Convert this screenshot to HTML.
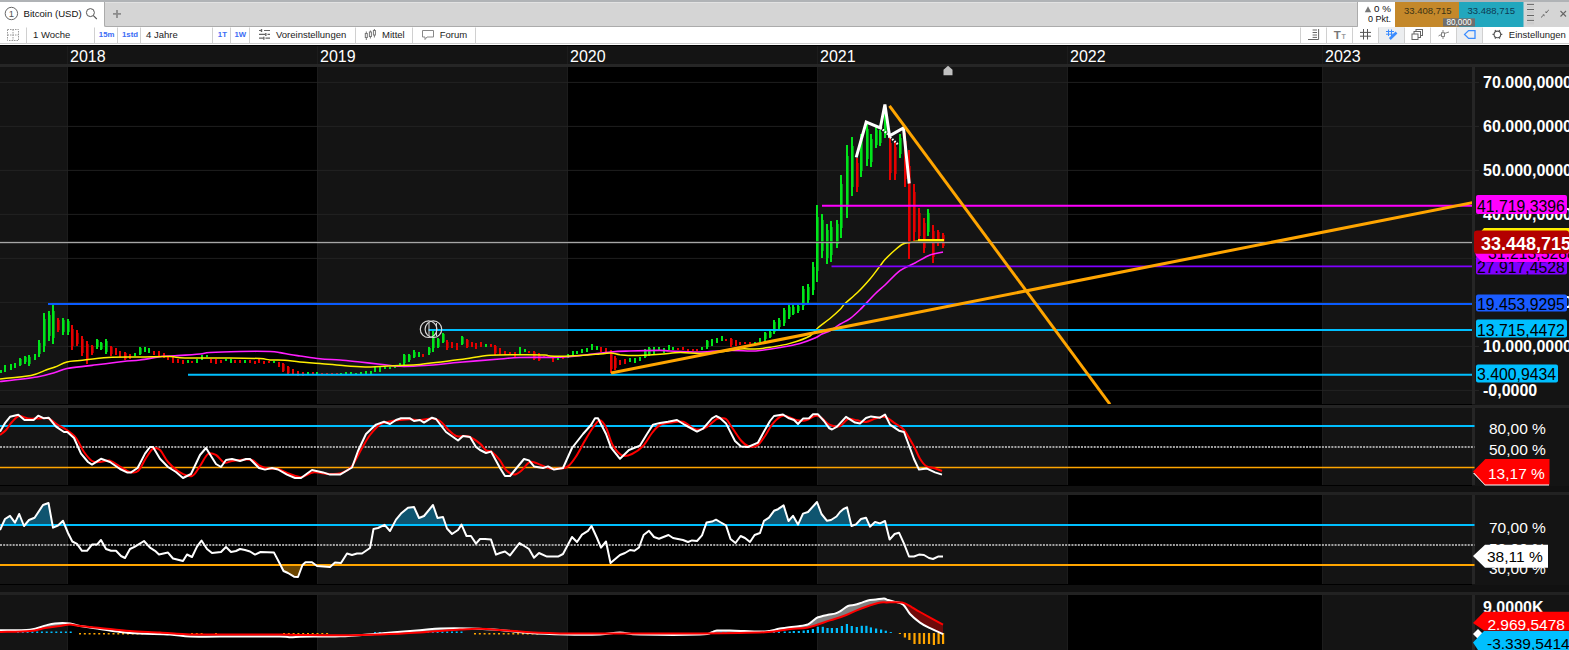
<!DOCTYPE html>
<html><head><meta charset="utf-8"><title>Bitcoin (USD)</title>
<style>
html,body{margin:0;padding:0;width:1569px;height:650px;overflow:hidden;background:#141414;}
body{position:relative;font-family:"Liberation Sans",sans-serif;}
svg text{font-family:"Liberation Sans",sans-serif;}
.a{position:absolute;}
.t{position:absolute;font-size:9.5px;color:#222;white-space:nowrap;line-height:1;}
.sep{position:absolute;width:1px;background:#d4d4d4;}
</style></head><body>
<svg width="1569" height="650" viewBox="0 0 1569 650" style="position:absolute;left:0;top:0"><defs>
<clipPath id="cMain"><rect x="0" y="67" width="1472" height="337"/></clipPath>
<clipPath id="cRsi"><rect x="0" y="408" width="1475" height="77"/></clipPath>
<clipPath id="cS2"><rect x="0" y="495" width="1475" height="89"/></clipPath>
<clipPath id="cMacd"><rect x="0" y="595" width="1472" height="55"/></clipPath>
<clipPath id="cAbove"><rect x="0" y="400" width="1472" height="125"/></clipPath>
<clipPath id="cBelow"><rect x="0" y="565" width="1472" height="30"/></clipPath>
<clipPath id="cAboveR"><polygon points="0,632 30,631 45,628 60,626 70,624.6 80,626 100,628 130,631 160,632.6 190,634.5 220,634.5 280,634.5 300,635 340,635.3 380,634.5 420,632.5 460,629.6 480,628.8 510,630.8 560,633.4 700,633.4 765,632.3 790,629 808,627.4 830,620.4 845,615.5 860,609 878,603 887,602.4 902,602.6 912,607.3 920,612 943,624.6 943,590 0,590"/></clipPath>
<clipPath id="cAboveW"><polygon points="0,630.3 30,629.7 45,625.6 55,623.4 70,623.4 80,626 100,629 120,632 140,633.6 170,634.5 190,636.6 220,636.6 280,636.6 290,637.3 300,636.7 340,636.3 380,633.4 420,630.3 440,628.5 470,628.5 500,630 530,633 565,634.5 600,634.5 620,632.5 640,634.5 700,634.5 712,632.3 717,630.5 735,630.7 765,631.5 780,628.6 800,626 808,624.4 812,621.6 818,617.3 828,614.8 835,613.6 840,611.4 848,606 855,604.8 862,602.6 868,600.4 876,599.5 884,598.5 888,600 894,601.6 903,604.4 910,614 920,622.6 930,628.2 943,634 943,590 0,590"/></clipPath>
</defs><rect x="0" y="45" width="1569" height="605" fill="#141414"/><rect x="68" y="67" width="250" height="337" fill="#000"/><rect x="68" y="408" width="250" height="77" fill="#000"/><rect x="68" y="495" width="250" height="89" fill="#000"/><rect x="68" y="595" width="250" height="55" fill="#000"/><rect x="568" y="67" width="250" height="337" fill="#000"/><rect x="568" y="408" width="250" height="77" fill="#000"/><rect x="568" y="495" width="250" height="89" fill="#000"/><rect x="568" y="595" width="250" height="55" fill="#000"/><rect x="1068" y="67" width="254" height="337" fill="#000"/><rect x="1068" y="408" width="254" height="77" fill="#000"/><rect x="1068" y="495" width="254" height="89" fill="#000"/><rect x="1068" y="595" width="254" height="55" fill="#000"/><rect x="67" y="46" width="1" height="18" fill="#1c1c1c"/><rect x="67" y="67" width="1" height="337" fill="#1c1c1c"/><rect x="67" y="408" width="1" height="77" fill="#1c1c1c"/><rect x="67" y="495" width="1" height="89" fill="#1c1c1c"/><rect x="67" y="595" width="1" height="55" fill="#1c1c1c"/><rect x="317" y="46" width="1" height="18" fill="#1c1c1c"/><rect x="317" y="67" width="1" height="337" fill="#1c1c1c"/><rect x="317" y="408" width="1" height="77" fill="#1c1c1c"/><rect x="317" y="495" width="1" height="89" fill="#1c1c1c"/><rect x="317" y="595" width="1" height="55" fill="#1c1c1c"/><rect x="567" y="46" width="1" height="18" fill="#1c1c1c"/><rect x="567" y="67" width="1" height="337" fill="#1c1c1c"/><rect x="567" y="408" width="1" height="77" fill="#1c1c1c"/><rect x="567" y="495" width="1" height="89" fill="#1c1c1c"/><rect x="567" y="595" width="1" height="55" fill="#1c1c1c"/><rect x="817" y="46" width="1" height="18" fill="#1c1c1c"/><rect x="817" y="67" width="1" height="337" fill="#1c1c1c"/><rect x="817" y="408" width="1" height="77" fill="#1c1c1c"/><rect x="817" y="495" width="1" height="89" fill="#1c1c1c"/><rect x="817" y="595" width="1" height="55" fill="#1c1c1c"/><rect x="1067" y="46" width="1" height="18" fill="#1c1c1c"/><rect x="1067" y="67" width="1" height="337" fill="#1c1c1c"/><rect x="1067" y="408" width="1" height="77" fill="#1c1c1c"/><rect x="1067" y="495" width="1" height="89" fill="#1c1c1c"/><rect x="1067" y="595" width="1" height="55" fill="#1c1c1c"/><rect x="1322" y="46" width="1" height="18" fill="#1c1c1c"/><rect x="1322" y="67" width="1" height="337" fill="#1c1c1c"/><rect x="1322" y="408" width="1" height="77" fill="#1c1c1c"/><rect x="1322" y="495" width="1" height="89" fill="#1c1c1c"/><rect x="1322" y="595" width="1" height="55" fill="#1c1c1c"/><rect x="0" y="45" width="1569" height="1" fill="#000"/><rect x="0" y="64" width="1569" height="3" fill="#262626"/><rect x="0" y="404" width="1472" height="1" fill="#000"/><rect x="0" y="405" width="1569" height="3" fill="#242424"/><rect x="0" y="485" width="1472" height="1" fill="#000"/><rect x="0" y="486" width="1569" height="6" fill="#111"/><rect x="0" y="492" width="1569" height="3" fill="#222"/><rect x="0" y="584" width="1472" height="1" fill="#000"/><rect x="0" y="585" width="1569" height="7" fill="#111"/><rect x="0" y="592" width="1569" height="3" fill="#222"/><rect x="1475" y="67" width="94" height="337" fill="#141414"/><rect x="1472" y="67" width="3" height="337" fill="#262626"/><rect x="1475" y="408" width="94" height="77" fill="#141414"/><rect x="1472" y="408" width="3" height="77" fill="#262626"/><rect x="1475" y="495" width="94" height="89" fill="#141414"/><rect x="1472" y="495" width="3" height="89" fill="#262626"/><rect x="1475" y="595" width="94" height="55" fill="#141414"/><rect x="1472" y="595" width="3" height="55" fill="#262626"/><rect x="0" y="81.9" width="1472" height="1" fill="#262626" opacity="0.8"/><rect x="1475" y="81.9" width="4" height="1" fill="#262626"/><rect x="0" y="125.9" width="1472" height="1" fill="#262626" opacity="0.8"/><rect x="1475" y="125.9" width="4" height="1" fill="#262626"/><rect x="0" y="169.9" width="1472" height="1" fill="#262626" opacity="0.8"/><rect x="1475" y="169.9" width="4" height="1" fill="#262626"/><rect x="0" y="213.9" width="1472" height="1" fill="#262626" opacity="0.8"/><rect x="1475" y="213.9" width="4" height="1" fill="#262626"/><rect x="0" y="257.9" width="1472" height="1" fill="#262626" opacity="0.8"/><rect x="1475" y="257.9" width="4" height="1" fill="#262626"/><rect x="0" y="301.9" width="1472" height="1" fill="#262626" opacity="0.8"/><rect x="1475" y="301.9" width="4" height="1" fill="#262626"/><rect x="0" y="345.9" width="1472" height="1" fill="#262626" opacity="0.8"/><rect x="1475" y="345.9" width="4" height="1" fill="#262626"/><rect x="0" y="389.9" width="1472" height="1" fill="#262626" opacity="0.8"/><rect x="1475" y="389.9" width="4" height="1" fill="#262626"/><rect x="0" y="390" width="1472" height="1" fill="#222" opacity="0"/><text x="70" y="62.3" fill="#fff" font-size="16">2018</text><text x="320" y="62.3" fill="#fff" font-size="16">2019</text><text x="570" y="62.3" fill="#fff" font-size="16">2020</text><text x="820" y="62.3" fill="#fff" font-size="16">2021</text><text x="1070" y="62.3" fill="#fff" font-size="16">2022</text><text x="1325" y="62.3" fill="#fff" font-size="16">2023</text><g clip-path="url(#cMain)"><g fill="#00e51a" shape-rendering="crispEdges"><rect x="0" y="370" width="2" height="3"/><rect x="4" y="365" width="2" height="7"/><rect x="10" y="364" width="2" height="6"/><rect x="14" y="363" width="2" height="5"/><rect x="19" y="358" width="2" height="8"/><rect x="21" y="359" width="1" height="6" opacity="0.6"/><rect x="24" y="356" width="2" height="8"/><rect x="26" y="357" width="1" height="5" opacity="0.6"/><rect x="28" y="355" width="2" height="11"/><rect x="30" y="357" width="1" height="7" opacity="0.6"/><rect x="34" y="354" width="2" height="6"/><rect x="38" y="340" width="2" height="17"/><rect x="40" y="343" width="1" height="11" opacity="0.6"/><rect x="43" y="313" width="2" height="39"/><rect x="45" y="319" width="1" height="27" opacity="0.6"/><rect x="48" y="311" width="2" height="30"/><rect x="50" y="315" width="1" height="21" opacity="0.6"/><rect x="52" y="305" width="2" height="39"/><rect x="54" y="311" width="1" height="27" opacity="0.6"/><rect x="62" y="318" width="2" height="17"/><rect x="64" y="320" width="1" height="12" opacity="0.6"/><rect x="67" y="319" width="2" height="16"/><rect x="69" y="321" width="1" height="11" opacity="0.6"/><rect x="96" y="339" width="2" height="10"/><rect x="98" y="340" width="1" height="7" opacity="0.6"/><rect x="100" y="342" width="2" height="8"/><rect x="102" y="343" width="1" height="6" opacity="0.6"/><rect x="105" y="339" width="2" height="15"/><rect x="107" y="341" width="1" height="11" opacity="0.6"/><rect x="134" y="353" width="2" height="3"/><rect x="139" y="347" width="2" height="8"/><rect x="141" y="348" width="1" height="6" opacity="0.6"/><rect x="144" y="347" width="2" height="5"/><rect x="148" y="348" width="2" height="5"/><rect x="187" y="360" width="2" height="3"/><rect x="196" y="359" width="2" height="4"/><rect x="201" y="355" width="2" height="5"/><rect x="206" y="355" width="2" height="2"/><rect x="225" y="359" width="2" height="2"/><rect x="230" y="359" width="2" height="4"/><rect x="244" y="360" width="2" height="3"/><rect x="273" y="361" width="2" height="2"/><rect x="307" y="372" width="2" height="3"/><rect x="316" y="372" width="2" height="2"/><rect x="340" y="373" width="2" height="2"/><rect x="345" y="372" width="2" height="2"/><rect x="350" y="372" width="2" height="2"/><rect x="355" y="373" width="2" height="2"/><rect x="360" y="372" width="2" height="2"/><rect x="365" y="371" width="2" height="3"/><rect x="370" y="371" width="2" height="3"/><rect x="374" y="367" width="2" height="5"/><rect x="379" y="367" width="2" height="5"/><rect x="384" y="367" width="2" height="2"/><rect x="389" y="367" width="2" height="2"/><rect x="394" y="366" width="2" height="2"/><rect x="399" y="363" width="2" height="3"/><rect x="403" y="354" width="2" height="11"/><rect x="405" y="355" width="1" height="8" opacity="0.6"/><rect x="408" y="354" width="2" height="8"/><rect x="410" y="355" width="1" height="5" opacity="0.6"/><rect x="413" y="350" width="2" height="8"/><rect x="415" y="352" width="1" height="5" opacity="0.6"/><rect x="418" y="352" width="2" height="5"/><rect x="428" y="347" width="2" height="8"/><rect x="430" y="348" width="1" height="5" opacity="0.6"/><rect x="432" y="331" width="2" height="21"/><rect x="434" y="334" width="1" height="14" opacity="0.6"/><rect x="437" y="338" width="2" height="10"/><rect x="439" y="339" width="1" height="8" opacity="0.6"/><rect x="442" y="333" width="2" height="10"/><rect x="444" y="334" width="1" height="8" opacity="0.6"/><rect x="461" y="336" width="2" height="9"/><rect x="463" y="337" width="1" height="7" opacity="0.6"/><rect x="485" y="344" width="2" height="3"/><rect x="519" y="347" width="2" height="7"/><rect x="524" y="349" width="2" height="3"/><rect x="557" y="358" width="2" height="2"/><rect x="567" y="354" width="2" height="4"/><rect x="572" y="351" width="2" height="6"/><rect x="576" y="351" width="2" height="3"/><rect x="581" y="349" width="2" height="4"/><rect x="586" y="348" width="2" height="4"/><rect x="591" y="344" width="2" height="6"/><rect x="596" y="346" width="2" height="4"/><rect x="629" y="358" width="2" height="4"/><rect x="634" y="358" width="2" height="5"/><rect x="639" y="357" width="2" height="4"/><rect x="644" y="349" width="2" height="9"/><rect x="646" y="350" width="1" height="7" opacity="0.6"/><rect x="648" y="347" width="2" height="9"/><rect x="650" y="348" width="1" height="6" opacity="0.6"/><rect x="653" y="347" width="2" height="7"/><rect x="658" y="347" width="2" height="3"/><rect x="663" y="348" width="2" height="5"/><rect x="668" y="345" width="2" height="5"/><rect x="672" y="347" width="2" height="3"/><rect x="701" y="347" width="2" height="3"/><rect x="706" y="340" width="2" height="9"/><rect x="708" y="341" width="1" height="6" opacity="0.6"/><rect x="711" y="339" width="2" height="7"/><rect x="716" y="338" width="2" height="5"/><rect x="721" y="336" width="2" height="5"/><rect x="754" y="342" width="2" height="2"/><rect x="759" y="338" width="2" height="4"/><rect x="764" y="332" width="2" height="9"/><rect x="766" y="333" width="1" height="6" opacity="0.6"/><rect x="769" y="330" width="2" height="8"/><rect x="771" y="332" width="1" height="5" opacity="0.6"/><rect x="773" y="320" width="2" height="14"/><rect x="775" y="322" width="1" height="10" opacity="0.6"/><rect x="778" y="318" width="2" height="11"/><rect x="780" y="320" width="1" height="7" opacity="0.6"/><rect x="783" y="308" width="2" height="18"/><rect x="785" y="310" width="1" height="13" opacity="0.6"/><rect x="788" y="305" width="2" height="14"/><rect x="790" y="307" width="1" height="10" opacity="0.6"/><rect x="792" y="305" width="2" height="10"/><rect x="794" y="307" width="1" height="7" opacity="0.6"/><rect x="797" y="305" width="2" height="8"/><rect x="799" y="306" width="1" height="5" opacity="0.6"/><rect x="802" y="286" width="2" height="24"/><rect x="804" y="289" width="1" height="17" opacity="0.6"/><rect x="807" y="284" width="2" height="19"/><rect x="809" y="287" width="1" height="13" opacity="0.6"/><rect x="812" y="262" width="2" height="33"/><rect x="814" y="267" width="1" height="23" opacity="0.6"/><rect x="816" y="205" width="2" height="77"/><rect x="818" y="217" width="1" height="54" opacity="0.6"/><rect x="821" y="214" width="2" height="44"/><rect x="823" y="220" width="1" height="31" opacity="0.6"/><rect x="826" y="224" width="2" height="40"/><rect x="828" y="230" width="1" height="28" opacity="0.6"/><rect x="830" y="221" width="2" height="41"/><rect x="832" y="227" width="1" height="28" opacity="0.6"/><rect x="836" y="220" width="2" height="28"/><rect x="838" y="224" width="1" height="20" opacity="0.6"/><rect x="840" y="175" width="2" height="63"/><rect x="842" y="184" width="1" height="44" opacity="0.6"/><rect x="846" y="145" width="2" height="73"/><rect x="848" y="156" width="1" height="51" opacity="0.6"/><rect x="851" y="137" width="2" height="59"/><rect x="853" y="146" width="1" height="41" opacity="0.6"/><rect x="860" y="134" width="2" height="43"/><rect x="862" y="140" width="1" height="31" opacity="0.6"/><rect x="866" y="122" width="2" height="44"/><rect x="868" y="129" width="1" height="30" opacity="0.6"/><rect x="870" y="134" width="2" height="33"/><rect x="872" y="139" width="1" height="23" opacity="0.6"/><rect x="875" y="127" width="2" height="21"/><rect x="877" y="130" width="1" height="15" opacity="0.6"/><rect x="879" y="130" width="2" height="16"/><rect x="881" y="132" width="1" height="11" opacity="0.6"/><rect x="884" y="110" width="2" height="28"/><rect x="886" y="115" width="1" height="19" opacity="0.6"/><rect x="899" y="134" width="2" height="24"/><rect x="901" y="138" width="1" height="16" opacity="0.6"/><rect x="927" y="209" width="2" height="27"/><rect x="929" y="213" width="1" height="19" opacity="0.6"/></g><g fill="#e60000" shape-rendering="crispEdges"><rect x="57" y="318" width="2" height="14"/><rect x="59" y="320" width="1" height="10" opacity="0.6"/><rect x="71" y="325" width="2" height="25"/><rect x="73" y="329" width="1" height="17" opacity="0.6"/><rect x="76" y="330" width="2" height="16"/><rect x="78" y="333" width="1" height="11" opacity="0.6"/><rect x="81" y="336" width="2" height="20"/><rect x="83" y="339" width="1" height="14" opacity="0.6"/><rect x="86" y="341" width="2" height="23"/><rect x="88" y="344" width="1" height="16" opacity="0.6"/><rect x="91" y="345" width="2" height="10"/><rect x="93" y="346" width="1" height="7" opacity="0.6"/><rect x="110" y="346" width="2" height="10"/><rect x="112" y="347" width="1" height="7" opacity="0.6"/><rect x="115" y="348" width="2" height="7"/><rect x="119" y="351" width="2" height="6"/><rect x="124" y="352" width="2" height="8"/><rect x="126" y="353" width="1" height="6" opacity="0.6"/><rect x="129" y="354" width="2" height="5"/><rect x="153" y="351" width="2" height="4"/><rect x="158" y="351" width="2" height="5"/><rect x="163" y="353" width="2" height="5"/><rect x="167" y="356" width="2" height="4"/><rect x="172" y="357" width="2" height="6"/><rect x="177" y="359" width="2" height="4"/><rect x="182" y="360" width="2" height="4"/><rect x="191" y="361" width="2" height="2"/><rect x="210" y="359" width="2" height="4"/><rect x="215" y="359" width="2" height="5"/><rect x="220" y="360" width="2" height="3"/><rect x="234" y="360" width="2" height="3"/><rect x="239" y="360" width="2" height="3"/><rect x="249" y="360" width="2" height="3"/><rect x="254" y="361" width="2" height="3"/><rect x="258" y="359" width="2" height="4"/><rect x="263" y="361" width="2" height="3"/><rect x="268" y="361" width="2" height="2"/><rect x="278" y="362" width="2" height="5"/><rect x="282" y="363" width="2" height="9"/><rect x="284" y="364" width="1" height="7" opacity="0.6"/><rect x="287" y="366" width="2" height="8"/><rect x="289" y="367" width="1" height="6" opacity="0.6"/><rect x="292" y="369" width="2" height="5"/><rect x="297" y="371" width="2" height="5"/><rect x="302" y="372" width="2" height="4"/><rect x="312" y="372" width="2" height="2"/><rect x="321" y="373" width="2" height="2"/><rect x="326" y="373" width="2" height="2"/><rect x="331" y="373" width="2" height="2"/><rect x="336" y="373" width="2" height="2"/><rect x="422" y="354" width="2" height="3"/><rect x="446" y="340" width="2" height="10"/><rect x="448" y="342" width="1" height="6" opacity="0.6"/><rect x="451" y="342" width="2" height="6"/><rect x="456" y="343" width="2" height="7"/><rect x="466" y="339" width="2" height="9"/><rect x="468" y="340" width="1" height="7" opacity="0.6"/><rect x="471" y="342" width="2" height="5"/><rect x="475" y="343" width="2" height="6"/><rect x="480" y="342" width="2" height="5"/><rect x="490" y="344" width="2" height="3"/><rect x="494" y="345" width="2" height="10"/><rect x="496" y="346" width="1" height="7" opacity="0.6"/><rect x="499" y="348" width="2" height="7"/><rect x="504" y="351" width="2" height="4"/><rect x="509" y="352" width="2" height="3"/><rect x="514" y="352" width="2" height="5"/><rect x="528" y="351" width="2" height="2"/><rect x="533" y="351" width="2" height="9"/><rect x="535" y="352" width="1" height="7" opacity="0.6"/><rect x="538" y="353" width="2" height="8"/><rect x="540" y="355" width="1" height="5" opacity="0.6"/><rect x="543" y="356" width="2" height="2"/><rect x="547" y="356" width="2" height="2"/><rect x="552" y="357" width="2" height="5"/><rect x="562" y="357" width="2" height="2"/><rect x="600" y="347" width="2" height="5"/><rect x="605" y="348" width="2" height="4"/><rect x="610" y="350" width="2" height="23"/><rect x="612" y="353" width="1" height="16" opacity="0.6"/><rect x="614" y="356" width="2" height="14"/><rect x="616" y="358" width="1" height="10" opacity="0.6"/><rect x="619" y="360" width="2" height="5"/><rect x="624" y="359" width="2" height="5"/><rect x="677" y="348" width="2" height="2"/><rect x="682" y="347" width="2" height="3"/><rect x="687" y="349" width="2" height="2"/><rect x="692" y="349" width="2" height="2"/><rect x="696" y="349" width="2" height="2"/><rect x="725" y="339" width="2" height="2"/><rect x="730" y="338" width="2" height="9"/><rect x="732" y="339" width="1" height="6" opacity="0.6"/><rect x="735" y="340" width="2" height="6"/><rect x="739" y="342" width="2" height="3"/><rect x="744" y="342" width="2" height="2"/><rect x="749" y="342" width="2" height="2"/><rect x="856" y="158" width="2" height="34"/><rect x="858" y="163" width="1" height="24" opacity="0.6"/><rect x="889" y="136" width="2" height="44"/><rect x="891" y="143" width="1" height="30" opacity="0.6"/><rect x="894" y="141" width="2" height="39"/><rect x="896" y="147" width="1" height="27" opacity="0.6"/><rect x="904" y="133" width="2" height="54"/><rect x="906" y="141" width="1" height="38" opacity="0.6"/><rect x="908" y="150" width="2" height="109"/><rect x="910" y="166" width="1" height="76" opacity="0.6"/><rect x="913" y="184" width="2" height="57"/><rect x="915" y="192" width="1" height="40" opacity="0.6"/><rect x="918" y="208" width="2" height="33"/><rect x="920" y="213" width="1" height="23" opacity="0.6"/><rect x="923" y="218" width="2" height="35"/><rect x="925" y="223" width="1" height="25" opacity="0.6"/><rect x="932" y="225" width="2" height="38"/><rect x="934" y="231" width="1" height="26" opacity="0.6"/><rect x="937" y="230" width="2" height="16"/><rect x="939" y="232" width="1" height="11" opacity="0.6"/><rect x="942" y="233" width="2" height="15"/><rect x="944" y="235" width="1" height="11" opacity="0.6"/></g><path d="M0,381.5 C6.2,380.8 27.8,378.5 37,377 C46.2,375.5 50.0,373.9 55,372.5 C60.0,371.1 60.8,369.7 67,368.5 C73.2,367.3 82.7,366.6 92,365.4 C101.3,364.2 115.0,362.4 123,361.5 C131.0,360.6 133.3,360.9 140,360 C146.7,359.1 157.2,357.0 163,356.3 C168.8,355.6 168.8,356.2 175,355.8 C181.2,355.4 194.2,354.6 200,354 C205.8,353.4 203.3,352.9 210,352.5 C216.7,352.1 230.0,351.7 240,351.5 C250.0,351.3 263.3,351.3 270,351.5 C276.7,351.7 276.7,352.1 280,352.6 C283.3,353.1 286.7,353.9 290,354.5 C293.3,355.1 295.0,355.3 300,356 C305.0,356.7 313.3,358.1 320,358.8 C326.7,359.5 333.3,359.5 340,360 C346.7,360.5 353.3,361.3 360,362 C366.7,362.7 373.3,363.5 380,364.2 C386.7,364.9 392.5,366.1 400,366.3 C407.5,366.5 415.0,366.2 425,365.5 C435.0,364.8 447.5,363.4 460,362.3 C472.5,361.2 490.0,359.8 500,359 C510.0,358.2 510.0,357.8 520,357.5 C530.0,357.2 549.2,357.6 560,357.2 C570.8,356.8 576.5,355.9 585,355 C593.5,354.1 603.5,352.7 611,352 C618.5,351.3 621.8,351.3 630,351 C638.2,350.7 653.3,350.4 660,350.4 C666.7,350.4 663.3,350.7 670,351 C676.7,351.3 690.0,352.1 700,352 C710.0,351.9 721.7,350.6 730,350.4 C738.3,350.2 745.0,351.0 750,351 C755.0,351.0 755.0,351.1 760,350.5 C765.0,349.9 773.3,348.7 780,347.5 C786.7,346.3 794.2,345.0 800,343.4 C805.8,341.8 811.3,339.6 815,338 C818.7,336.4 819.5,335.2 822,334 C824.5,332.8 827.0,332.3 830,330.7 C833.0,329.1 836.7,326.3 840,324.3 C843.3,322.3 846.7,321.0 850,318.6 C853.3,316.2 855.8,313.9 860,309.8 C864.2,305.7 870.8,298.1 875,294 C879.2,289.9 880.8,288.9 885,285 C889.2,281.1 895.0,274.3 900,270.6 C905.0,266.9 910.0,265.6 915,263 C920.0,260.4 925.3,256.8 930,255 C934.7,253.2 940.8,252.5 943,252" fill="none" stroke="#ff1eff" stroke-width="1.6" stroke-linejoin="round"/><path d="M0,379 C5.2,378.4 23.3,376.9 31,375.4 C38.7,373.9 42.0,371.4 46,370 C50.0,368.6 51.5,368.3 55,367 C58.5,365.7 62.8,363.1 67,362 C71.2,360.9 73.2,361.3 80,360.5 C86.8,359.7 98.0,358.0 108,357.4 C118.0,356.8 129.7,357.1 140,357 C150.3,356.9 162.5,356.5 170,356.6 C177.5,356.8 175.0,357.7 185,357.9 C195.0,358.1 217.5,357.8 230,357.9 C242.5,358.0 253.3,358.3 260,358.6 C266.7,358.9 265.8,359.6 270,359.9 C274.2,360.2 280.0,359.8 285,360.2 C290.0,360.6 294.2,361.5 300,362 C305.8,362.5 312.5,362.8 320,363.4 C327.5,364.0 337.5,365.2 345,365.8 C352.5,366.4 359.2,366.8 365,366.9 C370.8,367.0 374.2,366.7 380,366.5 C385.8,366.3 393.3,365.9 400,365.5 C406.7,365.1 410.0,365.4 420,364.4 C430.0,363.4 448.3,361.1 460,359.6 C471.7,358.1 480.0,356.1 490,355.3 C500.0,354.5 510.8,354.8 520,354.7 C529.2,354.6 540.0,354.8 545,355 C550.0,355.2 545.8,355.8 550,356 C554.2,356.2 561.7,356.3 570,356 C578.3,355.7 593.2,354.5 600,354 C606.8,353.5 607.7,352.8 611,352.9 C614.3,353.0 616.0,354.2 620,354.7 C624.0,355.1 628.3,355.7 635,355.6 C641.7,355.5 652.5,354.7 660,354.2 C667.5,353.7 673.3,352.7 680,352.6 C686.7,352.5 693.3,353.5 700,353.4 C706.7,353.3 713.3,352.7 720,352 C726.7,351.3 734.2,349.5 740,349 C745.8,348.5 750.0,349.3 755,349 C760.0,348.7 764.2,348.2 770,347.3 C775.8,346.4 783.3,345.3 790,343.4 C796.7,341.5 805.3,338.6 810,336 C814.7,333.4 814.7,330.7 818,327.8 C821.3,324.9 826.3,321.6 830,318.5 C833.7,315.4 837.5,312.0 840,309.5 C842.5,307.0 842.0,306.4 845,303.5 C848.0,300.6 853.8,296.1 858,292 C862.2,287.9 866.3,283.3 870,279 C873.7,274.7 877.5,269.2 880,266 C882.5,262.8 882.5,262.3 885,259.6 C887.5,256.9 892.0,252.6 895,250 C898.0,247.4 900.5,245.2 903,244 C905.5,242.8 907.2,243.0 910,242.5 C912.8,242.0 914.5,241.2 920,241 C925.5,240.8 939.2,241.0 943,241" fill="none" stroke="#ffee00" stroke-width="1.5" stroke-linejoin="round"/><rect x="918" y="239" width="26" height="3" fill="#ffee00"/><rect x="0" y="241" width="1472" height="1" fill="#000" opacity="0.6"/><rect x="0" y="241.8" width="1472" height="1.4" fill="#a6a6a6"/><line x1="48" y1="304" x2="1472" y2="304" stroke="#0a5cff" stroke-width="2.2"/><line x1="428.6" y1="330" x2="1472" y2="330" stroke="#00bfff" stroke-width="2"/><line x1="188" y1="374.7" x2="1472" y2="374.7" stroke="#00bfff" stroke-width="2"/><line x1="822" y1="205.8" x2="1472" y2="205.8" stroke="#ff00ff" stroke-width="2"/><line x1="831.5" y1="266.4" x2="1472" y2="266.4" stroke="#8000ff" stroke-width="1.8"/><polyline points="856.2,157.3 866.2,122 880.3,128 884.9,104.5 889.5,135.8 903.5,128 909.2,183.5" fill="none" stroke="#fff" stroke-width="3" stroke-linejoin="miter"/><line x1="611" y1="373" x2="1473" y2="202.5" stroke="#ffa500" stroke-width="3"/><line x1="889.5" y1="105.8" x2="1110" y2="404.3" stroke="#ffa500" stroke-width="3"/><path d="M880.5,127.5 L888,134.5 M890,137 L898,144.5" stroke="#fff" stroke-width="2.2" stroke-dasharray="1.6 1.4" fill="none"/><circle cx="428.6" cy="329.2" r="8.3" fill="none" stroke="#d8d8d8" stroke-width="1.2"/><circle cx="433.4" cy="329.2" r="8.3" fill="none" stroke="#d8d8d8" stroke-width="1.2"/><path d="M429,323 V336 M436.5,323 V336" stroke="#d8d8d8" stroke-width="1" fill="none"/></g><polygon points="943.5,69.7 948,65.8 952.5,69.7 952.5,75.2 943.5,75.2" fill="#c0c0c0"/><text x="1483" y="88.0" fill="#fff" font-size="16" font-weight="bold">70.000,0000</text><text x="1483" y="132.0" fill="#fff" font-size="16" font-weight="bold">60.000,0000</text><text x="1483" y="176.0" fill="#fff" font-size="16" font-weight="bold">50.000,0000</text><text x="1483" y="220.0" fill="#fff" font-size="16" font-weight="bold">40.000,0000</text><text x="1483" y="308.0" fill="#fff" font-size="16" font-weight="bold">20.000,0000</text><text x="1483" y="352.0" fill="#fff" font-size="16" font-weight="bold">10.000,0000</text><text x="1483" y="396.0" fill="#fff" font-size="16" font-weight="bold">-0,0000</text><rect x="1476" y="195" width="91" height="19" rx="2" fill="#ff00ff"/><text x="1477" y="211.8" fill="#000" font-size="15.8" font-weight="normal">41.719,3396</text><rect x="1476" y="256" width="91" height="18.5" rx="2" fill="#8000ff"/><text x="1477" y="272.6" fill="#000" font-size="15.8" font-weight="normal">27.917,4528</text><polygon points="1474,248 1484,238 1569,238 1569,262 1482,262 1476,256" fill="#ff00ff"/><text x="1488" y="258.5" fill="#000" font-size="15.8" font-weight="normal">31.213,5288</text><polygon points="1474,240 1484,228 1569,228 1569,250 1474,250" fill="#ffee00"/><rect x="1474" y="230.6" width="95" height="23.099999999999994" rx="3" fill="#b30000"/><text x="1481" y="250" fill="#fff" font-size="18" font-weight="bold">33.448,715</text><rect x="1476" y="294.4" width="91" height="17.200000000000045" rx="2" fill="#1a5cff"/><text x="1477" y="310" fill="#000" font-size="15.8" font-weight="normal">19.453,9295</text><rect x="1476" y="319.6" width="91" height="18.0" rx="2" fill="#00bfff"/><text x="1477" y="335.6" fill="#000" font-size="15.8" font-weight="normal">13.715,4472</text><rect x="1476" y="364.4" width="82" height="18.0" rx="2" fill="#00bfff"/><text x="1477" y="380.2" fill="#000" font-size="15.8" font-weight="normal">3.400,9434</text><g clip-path="url(#cRsi)"><line x1="0" y1="426" x2="1474.5" y2="426" stroke="#00bfff" stroke-width="2"/><line x1="0" y1="447" x2="1474.5" y2="447" stroke="#a0a0a0" stroke-width="2" stroke-dasharray="2 1.17"/><line x1="0" y1="467.4" x2="1474.5" y2="467.4" stroke="#ffa500" stroke-width="1.5"/><path d="M0,435 C1.0,434.2 4.0,432.2 6,430 C8.0,427.8 9.8,424.3 12,422 C14.2,419.7 16.3,416.6 19,416 C21.7,415.4 24.8,418.1 28,418.5 C31.2,418.9 34.7,418.5 38,418.5 C41.3,418.5 44.7,417.2 48,418.3 C51.3,419.4 55.0,423.1 58,425 C61.0,426.9 63.0,427.3 66,429.5 C69.0,431.7 73.0,434.2 76,438 C79.0,441.8 81.3,448.2 84,452 C86.7,455.8 89.3,459.3 92,461 C94.7,462.7 97.0,462.1 100,462 C103.0,461.9 106.7,459.9 110,460.6 C113.3,461.4 116.7,464.6 120,466.5 C123.3,468.4 127.0,471.2 130,472 C133.0,472.8 135.3,473.3 138,471 C140.7,468.7 143.5,461.7 146,458 C148.5,454.3 150.7,449.9 153,448.6 C155.3,447.3 157.5,447.8 160,450 C162.5,452.2 164.7,458.3 168,462 C171.3,465.7 176.0,470.1 180,472.4 C184.0,474.7 188.7,477.1 192,476 C195.3,474.9 197.3,469.7 200,466 C202.7,462.3 205.3,455.8 208,454 C210.7,452.2 213.3,453.6 216,455 C218.7,456.4 221.3,461.6 224,462.6 C226.7,463.6 229.3,461.4 232,461 C234.7,460.6 236.7,460.2 240,460 C243.3,459.8 248.7,459.0 252,460 C255.3,461.0 257.3,464.6 260,466 C262.7,467.4 265.0,468.1 268,468.6 C271.0,469.1 274.3,468.1 278,469 C281.7,469.9 286.0,472.7 290,474 C294.0,475.3 298.2,477.3 302,477 C305.8,476.7 308.3,472.9 313,472.4 C317.7,471.9 325.0,474.0 330,474 C335.0,474.0 339.3,473.7 343,472.4 C346.7,471.1 348.8,470.1 352,466 C355.2,461.9 359.0,453.2 362,448 C365.0,442.8 367.0,438.9 370,435 C373.0,431.1 376.3,426.9 380,424.6 C383.7,422.3 388.7,421.8 392,421 C395.3,420.2 397.0,420.3 400,420 C403.0,419.7 406.7,419.3 410,419.3 C413.3,419.3 416.3,420.1 420,420 C423.7,419.9 428.7,418.3 432,418.5 C435.3,418.7 437.3,419.2 440,421 C442.7,422.8 445.3,427.0 448,429.5 C450.7,432.0 453.3,434.9 456,436 C458.7,437.1 461.7,435.8 464,436 C466.3,436.2 467.3,435.7 470,437 C472.7,438.3 477.3,441.4 480,443.6 C482.7,445.8 484.0,449.0 486,450.4 C488.0,451.8 489.7,450.3 492,452 C494.3,453.7 497.7,457.4 500,460.4 C502.3,463.4 503.7,467.6 506,470 C508.3,472.4 511.5,474.4 514,474.6 C516.5,474.8 518.3,473.1 521,471 C523.7,468.9 526.8,463.1 530,462 C533.2,460.9 536.7,463.5 540,464.6 C543.3,465.7 546.7,467.9 550,468.6 C553.3,469.3 557.0,469.0 560,468.6 C563.0,468.2 565.3,468.4 568,466.4 C570.7,464.4 573.2,460.8 576,456.5 C578.8,452.2 582.2,445.3 585,440.5 C587.8,435.7 590.5,430.9 593,427.5 C595.5,424.1 597.8,420.3 600,420.3 C602.2,420.3 603.8,423.3 606,427.5 C608.2,431.7 610.3,441.0 613,445.6 C615.7,450.2 618.8,454.0 622,455.4 C625.2,456.8 628.5,455.6 632,454 C635.5,452.4 639.7,449.5 643,446 C646.3,442.5 649.2,436.5 652,433 C654.8,429.5 656.7,426.7 660,425 C663.3,423.3 668.2,423.1 672,422.6 C675.8,422.1 679.3,420.8 683,421.8 C686.7,422.8 691.2,427.3 694,428.6 C696.8,429.9 697.8,429.8 700,429.5 C702.2,429.2 704.3,428.7 707,427 C709.7,425.3 713.8,420.7 716,419.3 C718.2,417.9 718.3,418.6 720,418.5 C721.7,418.4 724.0,417.5 726,419 C728.0,420.5 729.5,423.9 732,427.5 C734.5,431.1 738.3,437.4 741,440.5 C743.7,443.6 745.3,445.1 748,446 C750.7,446.9 754.2,447.3 757,445.6 C759.8,443.9 762.5,439.5 765,436 C767.5,432.5 769.5,427.8 772,424.6 C774.5,421.4 777.7,418.2 780,416.8 C782.3,415.4 783.2,415.4 786,416 C788.8,416.6 793.7,419.6 797,420.3 C800.3,421.0 802.8,421.1 806,420.3 C809.2,419.5 813.3,416.0 816,415.7 C818.7,415.4 819.7,416.8 822,418.3 C824.3,419.9 827.0,423.7 830,425 C833.0,426.3 837.0,427.0 840,426 C843.0,425.0 845.2,419.9 848,419 C850.8,418.1 854.0,419.8 857,420.3 C860.0,420.8 862.8,422.3 866,422 C869.2,421.7 872.8,419.1 876,418.3 C879.2,417.5 881.8,416.1 885,417 C888.2,417.9 891.8,421.2 895,423.4 C898.2,425.6 900.8,426.1 904,430 C907.2,433.9 911.3,441.8 914,446.6 C916.7,451.4 918.0,455.6 920,458.8 C922.0,462.0 923.7,464.5 926,466 C928.3,467.5 931.3,467.2 934,468 C936.7,468.8 940.7,470.5 942,471" fill="none" stroke="#ff0000" stroke-width="2" stroke-linejoin="round"/><polyline points="0,431.8 5.4,422.6 10,416.8 18.3,414.8 24.5,420 33.6,420 38.2,415.7 44,418.3 48.6,417.7 56,426.7 64,432 67.3,432 74,438 81,453.6 88,462 92,464.6 101,458.8 110,462 120,469 127,472.4 131,472.4 137.6,468 145,453.6 150,447 153,447 160,458.8 168,467 176,472 183,478 191,474 200,455 206,448 216,464 221,467 226,460 232,459 240,461 246,459 250,459 259,468 265,469.6 272,468 278,469.5 287,474.6 295,478 301,478 312,470 323,472.4 330,474.6 340,474.6 352,467.5 358,451 366,434 376,424.6 384,421.8 390,424 396,420 401,418.3 410,418.3 414,421 420,420 424,422.6 432,417.7 436,419 446,432 458,440.5 463,436 470,437 476,447 480,450 486,453 491,451.6 500,468 505,476 510,476 524,459 529,460.4 534,466.4 543,468 548,466.4 554,469.6 563,468 572,448 583,434 591,425 595,418.3 598,418.3 606,434 611,447.6 620,458.8 629,450 640,445.6 647,434 653,424.6 660,423 668,421.8 677,420 685,425 697,431.6 703,428.6 712,418.3 716,416 720,418 726,423.4 735,441 741,446.6 748,447 758,442.6 764,431.6 770,421 774,416 783,414.5 789,418.3 794,420 798,424 803,418.6 809,418.3 813,414.3 818,414.3 824,421 829,428 832,429.5 837,426.7 846,416.8 855,422.6 860,423.4 866,418 871,416.4 880,417.7 885,414.5 890,424.6 899,430.7 904,432 914,459 919,469.6 927,468.6 935,472.4 942,474.6" fill="none" stroke="#fff" stroke-width="2" stroke-linejoin="round"/></g><text x="1489" y="433.8" fill="#fff" font-size="15.5" font-weight="normal">80,00 %</text><text x="1489" y="454.6" fill="#fff" font-size="15.5" font-weight="normal">50,00 %</text><polygon points="1473,473 1485,485.6 1549,485.6 1549,473" fill="#fff"/><polygon points="1473,471.5 1485.4,459 1549.5,459 1549.5,484.6 1485,484.6" fill="#ff0000"/><text x="1488" y="478.5" fill="#fff" font-size="15.5" font-weight="normal">13,17 %</text><g clip-path="url(#cS2)"><polygon points="0,530 5,519 10,515.8 15,522.6 19.2,514 24,526 29,520 34.6,517.7 43,505 48.5,503 53,527.7 58,525.5 63,520.8 68,533 72.3,541.5 77,543.8 82,550.8 87,550.8 92,544.6 97,544.6 101,540 106,549 111,550.8 116,550.8 121,556 125,558 130,549 135,546.6 144,541 150,547.7 155,550.8 159,554.5 168,552.6 173,558.5 183,561 187,554.5 192,557 197,546.6 201.5,540.5 207,549 212,553 221,552 226,547 231,552 236,551 240,549 245,550 250,551.5 255,554.6 260.5,552 274,552.6 280,564 283.5,571 288,573 294,576.7 298,577 302.5,565 305.5,562.3 312,562.3 317,566 330,567 335,562.6 341,563 347,553.5 352,555 357,553.5 362,553.5 370,548 373.5,529 378,528 384.6,524.8 390,531 396,519.6 401,513.6 408,507.7 414,507 419,518 424,516 433,505 437.5,518 443,517 447,528.5 452,534 458,530 461.5,524.6 466.5,536 471,536 476,543.6 480,539 485,539 491,539.6 496,554.6 500,553 505,551.5 510,555.4 519.5,543 529,549 534,557.7 539,553 547,556.6 558,556.6 563,554 572,537 577,542 582,534.6 588,530.8 591.5,526 597,538 601,547.7 606,541.5 610.5,563 620,555 625,553 630,550 634.5,550.8 639,547.5 643.6,535 649,530.8 654,537 659,538.7 668.5,535 673,538 683,540 688,542 692,540.4 697,541 702,535.4 706.5,522.6 712,521.6 716,519.7 720,522 726,525.4 730.5,539 735.5,543 740.6,536 745,538 750,542 754.6,535 760,533 764,520.8 769,517.7 774,510.8 778,509.2 783.6,505.4 788.5,521 793,515.8 798,524.6 803,513.6 808,512 817,502 821.5,514 827,520.8 831,520 836.5,516.5 840,512 843.5,509 847,507.3 851.5,526 856,524.4 861,519 866,517.7 870,526.7 875,522 880,523.4 885,521 889.6,539.6 894.6,534 899,532.7 904,543.6 909,556.5 914,556.5 919,554.6 924,555 929,558 933,559 938,556.6 943,556.6 943,525 0,525" fill="#0f5570" clip-path="url(#cAbove)"/><polygon points="0,530 5,519 10,515.8 15,522.6 19.2,514 24,526 29,520 34.6,517.7 43,505 48.5,503 53,527.7 58,525.5 63,520.8 68,533 72.3,541.5 77,543.8 82,550.8 87,550.8 92,544.6 97,544.6 101,540 106,549 111,550.8 116,550.8 121,556 125,558 130,549 135,546.6 144,541 150,547.7 155,550.8 159,554.5 168,552.6 173,558.5 183,561 187,554.5 192,557 197,546.6 201.5,540.5 207,549 212,553 221,552 226,547 231,552 236,551 240,549 245,550 250,551.5 255,554.6 260.5,552 274,552.6 280,564 283.5,571 288,573 294,576.7 298,577 302.5,565 305.5,562.3 312,562.3 317,566 330,567 335,562.6 341,563 347,553.5 352,555 357,553.5 362,553.5 370,548 373.5,529 378,528 384.6,524.8 390,531 396,519.6 401,513.6 408,507.7 414,507 419,518 424,516 433,505 437.5,518 443,517 447,528.5 452,534 458,530 461.5,524.6 466.5,536 471,536 476,543.6 480,539 485,539 491,539.6 496,554.6 500,553 505,551.5 510,555.4 519.5,543 529,549 534,557.7 539,553 547,556.6 558,556.6 563,554 572,537 577,542 582,534.6 588,530.8 591.5,526 597,538 601,547.7 606,541.5 610.5,563 620,555 625,553 630,550 634.5,550.8 639,547.5 643.6,535 649,530.8 654,537 659,538.7 668.5,535 673,538 683,540 688,542 692,540.4 697,541 702,535.4 706.5,522.6 712,521.6 716,519.7 720,522 726,525.4 730.5,539 735.5,543 740.6,536 745,538 750,542 754.6,535 760,533 764,520.8 769,517.7 774,510.8 778,509.2 783.6,505.4 788.5,521 793,515.8 798,524.6 803,513.6 808,512 817,502 821.5,514 827,520.8 831,520 836.5,516.5 840,512 843.5,509 847,507.3 851.5,526 856,524.4 861,519 866,517.7 870,526.7 875,522 880,523.4 885,521 889.6,539.6 894.6,534 899,532.7 904,543.6 909,556.5 914,556.5 919,554.6 924,555 929,558 933,559 938,556.6 943,556.6 943,565 0,565" fill="#6b4500" clip-path="url(#cBelow)"/><line x1="0" y1="525" x2="1474.5" y2="525" stroke="#00bfff" stroke-width="2"/><line x1="0" y1="545" x2="1474.5" y2="545" stroke="#a0a0a0" stroke-width="2" stroke-dasharray="2 1.17"/><line x1="0" y1="565" x2="1474.5" y2="565" stroke="#ffa500" stroke-width="2"/><polyline points="0,530 5,519 10,515.8 15,522.6 19.2,514 24,526 29,520 34.6,517.7 43,505 48.5,503 53,527.7 58,525.5 63,520.8 68,533 72.3,541.5 77,543.8 82,550.8 87,550.8 92,544.6 97,544.6 101,540 106,549 111,550.8 116,550.8 121,556 125,558 130,549 135,546.6 144,541 150,547.7 155,550.8 159,554.5 168,552.6 173,558.5 183,561 187,554.5 192,557 197,546.6 201.5,540.5 207,549 212,553 221,552 226,547 231,552 236,551 240,549 245,550 250,551.5 255,554.6 260.5,552 274,552.6 280,564 283.5,571 288,573 294,576.7 298,577 302.5,565 305.5,562.3 312,562.3 317,566 330,567 335,562.6 341,563 347,553.5 352,555 357,553.5 362,553.5 370,548 373.5,529 378,528 384.6,524.8 390,531 396,519.6 401,513.6 408,507.7 414,507 419,518 424,516 433,505 437.5,518 443,517 447,528.5 452,534 458,530 461.5,524.6 466.5,536 471,536 476,543.6 480,539 485,539 491,539.6 496,554.6 500,553 505,551.5 510,555.4 519.5,543 529,549 534,557.7 539,553 547,556.6 558,556.6 563,554 572,537 577,542 582,534.6 588,530.8 591.5,526 597,538 601,547.7 606,541.5 610.5,563 620,555 625,553 630,550 634.5,550.8 639,547.5 643.6,535 649,530.8 654,537 659,538.7 668.5,535 673,538 683,540 688,542 692,540.4 697,541 702,535.4 706.5,522.6 712,521.6 716,519.7 720,522 726,525.4 730.5,539 735.5,543 740.6,536 745,538 750,542 754.6,535 760,533 764,520.8 769,517.7 774,510.8 778,509.2 783.6,505.4 788.5,521 793,515.8 798,524.6 803,513.6 808,512 817,502 821.5,514 827,520.8 831,520 836.5,516.5 840,512 843.5,509 847,507.3 851.5,526 856,524.4 861,519 866,517.7 870,526.7 875,522 880,523.4 885,521 889.6,539.6 894.6,534 899,532.7 904,543.6 909,556.5 914,556.5 919,554.6 924,555 929,558 933,559 938,556.6 943,556.6" fill="none" stroke="#fff" stroke-width="2" stroke-linejoin="round"/></g><text x="1489" y="533" fill="#fff" font-size="15.5" font-weight="normal">70,00 %</text><text x="1489" y="554" fill="#fff" font-size="15.5" font-weight="normal">50,00 %</text><text x="1489" y="574" fill="#fff" font-size="15.5" font-weight="normal">30,00 %</text><polygon points="1473,556 1485,544.8 1548,544.8 1548,567.7 1485,567.7" fill="#fff"/><text x="1487" y="562.3" fill="#000" font-size="15.5" font-weight="normal">38,11 %</text><g clip-path="url(#cMacd)"><polygon points="0,630.3 30,629.7 45,625.6 55,623.4 70,623.4 80,626 100,629 120,632 140,633.6 170,634.5 190,636.6 220,636.6 280,636.6 290,637.3 300,636.7 340,636.3 380,633.4 420,630.3 440,628.5 470,628.5 500,630 530,633 565,634.5 600,634.5 620,632.5 640,634.5 700,634.5 712,632.3 717,630.5 735,630.7 765,631.5 780,628.6 800,626 808,624.4 812,621.6 818,617.3 828,614.8 835,613.6 840,611.4 848,606 855,604.8 862,602.6 868,600.4 876,599.5 884,598.5 888,600 894,601.6 903,604.4 910,614 920,622.6 930,628.2 943,634 943,624.6 920,612 912,607.3 902,602.6 887,602.4 878,603 860,609 845,615.5 830,620.4 808,627.4 790,629 765,632.3 700,633.4 560,633.4 510,630.8 480,628.8 460,629.6 420,632.5 380,634.5 340,635.3 300,635 280,634.5 220,634.5 190,634.5 160,632.6 130,631 100,628 80,626 70,624.6 60,626 45,628 30,631 0,632" fill="#808080" clip-path="url(#cAboveR)"/><polygon points="0,630.3 30,629.7 45,625.6 55,623.4 70,623.4 80,626 100,629 120,632 140,633.6 170,634.5 190,636.6 220,636.6 280,636.6 290,637.3 300,636.7 340,636.3 380,633.4 420,630.3 440,628.5 470,628.5 500,630 530,633 565,634.5 600,634.5 620,632.5 640,634.5 700,634.5 712,632.3 717,630.5 735,630.7 765,631.5 780,628.6 800,626 808,624.4 812,621.6 818,617.3 828,614.8 835,613.6 840,611.4 848,606 855,604.8 862,602.6 868,600.4 876,599.5 884,598.5 888,600 894,601.6 903,604.4 910,614 920,622.6 930,628.2 943,634 943,624.6 920,612 912,607.3 902,602.6 887,602.4 878,603 860,609 845,615.5 830,620.4 808,627.4 790,629 765,632.3 700,633.4 560,633.4 510,630.8 480,628.8 460,629.6 420,632.5 380,634.5 340,635.3 300,635 280,634.5 220,634.5 190,634.5 160,632.6 130,631 100,628 80,626 70,624.6 60,626 45,628 30,631 0,632" fill="#6e0a0a" clip-path="url(#cAboveW)"/><g fill="#00bfff"><rect x="17.0" y="631.5" width="2" height="1.5"/><rect x="21.8" y="631.5" width="2" height="1.5"/><rect x="26.6" y="631.5" width="2" height="1.5"/><rect x="31.4" y="631.5" width="2" height="1.5"/><rect x="36.2" y="631.5" width="2" height="1.5"/><rect x="40.9" y="631.5" width="2" height="1.5"/><rect x="45.7" y="631.5" width="2" height="1.5"/><rect x="50.5" y="631.5" width="2" height="1.5"/><rect x="55.3" y="631.5" width="2" height="1.5"/><rect x="60.1" y="631.5" width="2" height="1.5"/><rect x="64.9" y="631.5" width="2" height="1.5"/><rect x="69.7" y="631.5" width="2" height="1.5"/><rect x="374.0" y="632.0" width="2" height="1"/><rect x="378.8" y="632.0" width="2" height="1"/><rect x="383.6" y="632.0" width="2" height="1"/><rect x="388.4" y="632.0" width="2" height="1"/><rect x="427.0" y="631.5" width="2" height="1.5"/><rect x="431.8" y="631.5" width="2" height="1.5"/><rect x="436.6" y="631.5" width="2" height="1.5"/><rect x="441.4" y="631.5" width="2" height="1.5"/><rect x="446.2" y="631.5" width="2" height="1.5"/><rect x="451.0" y="631.5" width="2" height="1.5"/><rect x="455.7" y="631.5" width="2" height="1.5"/><rect x="460.5" y="631.5" width="2" height="1.5"/><rect x="720.0" y="631.5" width="2" height="1.5"/><rect x="724.8" y="631.5" width="2" height="1.5"/><rect x="772.8" y="631.5" width="2.2" height="1.5"/><rect x="777.8" y="631.5" width="2.2" height="1.5"/><rect x="783.6" y="631.5" width="2.2" height="1.5"/><rect x="788.6" y="631.5" width="2.2" height="1.5"/><rect x="792.7" y="631.0" width="2.2" height="2"/><rect x="797.7" y="631.0" width="2.2" height="2"/><rect x="802.6" y="630.5" width="2.2" height="2.5"/><rect x="806.8" y="630.0" width="2.2" height="3"/><rect x="811.8" y="629.0" width="2.2" height="4"/><rect x="816.7" y="626.8" width="2.2" height="6.2"/><rect x="821.7" y="626.8" width="2.2" height="6.2"/><rect x="826.4" y="628.0" width="2.2" height="5"/><rect x="830.8" y="628.0" width="2.2" height="5"/><rect x="835.8" y="628.0" width="2.2" height="5"/><rect x="840.8" y="626.0" width="2.2" height="7"/><rect x="845.8" y="624.0" width="2.2" height="9"/><rect x="850.7" y="626.0" width="2.2" height="7"/><rect x="855.7" y="627.0" width="2.2" height="6"/><rect x="860.7" y="625.8" width="2.2" height="7.2"/><rect x="865.3" y="625.8" width="2.2" height="7.2"/><rect x="869.8" y="627.4" width="2.2" height="5.6"/><rect x="875.0" y="628.5" width="2.2" height="4.5"/><rect x="880.0" y="629.5" width="2.2" height="3.5"/><rect x="884.7" y="630.7" width="2.2" height="2.3"/><rect x="889.7" y="632.1" width="2.2" height="0.9"/></g><g fill="#ffa500"><rect x="79.0" y="633.0" width="2" height="1.5"/><rect x="83.8" y="633.0" width="2" height="1.5"/><rect x="88.6" y="633.0" width="2" height="1.5"/><rect x="93.4" y="633.0" width="2" height="1.5"/><rect x="98.2" y="633.0" width="2" height="1.5"/><rect x="103.0" y="633.0" width="2" height="1.5"/><rect x="107.7" y="633.0" width="2" height="1.5"/><rect x="112.5" y="633.0" width="2" height="1.5"/><rect x="117.3" y="633.0" width="2" height="1.5"/><rect x="122.1" y="633.0" width="2" height="1.5"/><rect x="126.9" y="633.0" width="2" height="1.5"/><rect x="131.7" y="633.0" width="2" height="1.5"/><rect x="136.5" y="633.0" width="2" height="1.5"/><rect x="141.3" y="633.0" width="2" height="1.5"/><rect x="191.0" y="633.0" width="2" height="1"/><rect x="195.8" y="633.0" width="2" height="1"/><rect x="200.6" y="633.0" width="2" height="1"/><rect x="215.0" y="633.0" width="2" height="1"/><rect x="283.0" y="633.0" width="2" height="1"/><rect x="287.8" y="633.0" width="2" height="1"/><rect x="292.6" y="633.0" width="2" height="1"/><rect x="297.4" y="633.0" width="2" height="1"/><rect x="302.2" y="633.0" width="2" height="1"/><rect x="307.0" y="633.0" width="2" height="1"/><rect x="311.7" y="633.0" width="2" height="1"/><rect x="316.5" y="633.0" width="2" height="1"/><rect x="321.3" y="633.0" width="2" height="1"/><rect x="326.1" y="633.0" width="2" height="1"/><rect x="474.0" y="633.0" width="2" height="1.5"/><rect x="478.8" y="633.0" width="2" height="1.5"/><rect x="483.6" y="633.0" width="2" height="1.5"/><rect x="488.4" y="633.0" width="2" height="1.5"/><rect x="493.2" y="633.0" width="2" height="1.5"/><rect x="498.0" y="633.0" width="2" height="1.5"/><rect x="502.7" y="633.0" width="2" height="1.5"/><rect x="507.5" y="633.0" width="2" height="1.5"/><rect x="512.3" y="633.0" width="2" height="1.5"/><rect x="517.1" y="633.0" width="2" height="1.5"/><rect x="521.9" y="633.0" width="2" height="1.5"/><rect x="526.7" y="633.0" width="2" height="1.5"/><rect x="531.5" y="633.0" width="2" height="1.5"/><rect x="536.3" y="633.0" width="2" height="1.5"/><rect x="898.8" y="633.0" width="2.2" height="1"/><rect x="903.8" y="633.0" width="2.2" height="4.5"/><rect x="908.3" y="633.0" width="2.2" height="7"/><rect x="913.4" y="633.0" width="2.2" height="11"/><rect x="918.4" y="633.0" width="2.2" height="11"/><rect x="922.9" y="633.0" width="2.2" height="11"/><rect x="927.9" y="633.0" width="2.2" height="11"/><rect x="932.8" y="633.0" width="2.2" height="12"/><rect x="937.5" y="633.0" width="2.2" height="11"/><rect x="942.0" y="633.0" width="2.2" height="11"/></g><path d="M0,630.3 C5.0,630.2 22.5,630.5 30,629.7 C37.5,628.9 40.8,626.7 45,625.6 C49.2,624.5 50.8,623.8 55,623.4 C59.2,623.0 65.8,623.0 70,623.4 C74.2,623.8 75.0,625.1 80,626 C85.0,626.9 93.3,628.0 100,629 C106.7,630.0 113.3,631.2 120,632 C126.7,632.8 131.7,633.2 140,633.6 C148.3,634.0 161.7,634.0 170,634.5 C178.3,635.0 181.7,636.2 190,636.6 C198.3,637.0 205.0,636.6 220,636.6 C235.0,636.6 268.3,636.5 280,636.6 C291.7,636.7 286.7,637.3 290,637.3 C293.3,637.3 291.7,636.9 300,636.7 C308.3,636.5 326.7,636.8 340,636.3 C353.3,635.8 366.7,634.4 380,633.4 C393.3,632.4 410.0,631.1 420,630.3 C430.0,629.5 431.7,628.8 440,628.5 C448.3,628.2 460.0,628.2 470,628.5 C480.0,628.8 490.0,629.2 500,630 C510.0,630.8 519.2,632.2 530,633 C540.8,633.8 553.3,634.2 565,634.5 C576.7,634.8 590.8,634.8 600,634.5 C609.2,634.2 613.3,632.5 620,632.5 C626.7,632.5 626.7,634.2 640,634.5 C653.3,634.8 688.0,634.9 700,634.5 C712.0,634.1 709.2,633.0 712,632.3 C714.8,631.6 713.2,630.8 717,630.5 C720.8,630.2 727.0,630.5 735,630.7 C743.0,630.9 757.5,631.9 765,631.5 C772.5,631.1 774.2,629.5 780,628.6 C785.8,627.7 795.3,626.7 800,626 C804.7,625.3 806.0,625.1 808,624.4 C810.0,623.7 810.3,622.8 812,621.6 C813.7,620.4 815.3,618.4 818,617.3 C820.7,616.2 825.2,615.4 828,614.8 C830.8,614.2 833.0,614.2 835,613.6 C837.0,613.0 837.8,612.7 840,611.4 C842.2,610.1 845.5,607.1 848,606 C850.5,604.9 852.7,605.4 855,604.8 C857.3,604.2 859.8,603.3 862,602.6 C864.2,601.9 865.7,600.9 868,600.4 C870.3,599.9 873.3,599.8 876,599.5 C878.7,599.2 882.0,598.4 884,598.5 C886.0,598.6 886.3,599.5 888,600 C889.7,600.5 891.5,600.9 894,601.6 C896.5,602.3 900.3,602.3 903,604.4 C905.7,606.5 907.2,611.0 910,614 C912.8,617.0 916.7,620.2 920,622.6 C923.3,625.0 926.2,626.3 930,628.2 C933.8,630.1 940.8,633.0 943,634" fill="none" stroke="#fff" stroke-width="2" stroke-linejoin="round"/><path d="M0,632 C5.0,631.8 22.5,631.7 30,631 C37.5,630.3 40.0,628.8 45,628 C50.0,627.2 55.8,626.6 60,626 C64.2,625.4 66.7,624.6 70,624.6 C73.3,624.6 75.0,625.4 80,626 C85.0,626.6 91.7,627.2 100,628 C108.3,628.8 120.0,630.2 130,631 C140.0,631.8 150.0,632.0 160,632.6 C170.0,633.2 180.0,634.2 190,634.5 C200.0,634.8 205.0,634.5 220,634.5 C235.0,634.5 266.7,634.4 280,634.5 C293.3,634.6 290.0,634.9 300,635 C310.0,635.1 326.7,635.4 340,635.3 C353.3,635.2 366.7,635.0 380,634.5 C393.3,634.0 406.7,633.3 420,632.5 C433.3,631.7 450.0,630.2 460,629.6 C470.0,629.0 471.7,628.6 480,628.8 C488.3,629.0 496.7,630.0 510,630.8 C523.3,631.6 528.3,633.0 560,633.4 C591.7,633.8 665.8,633.6 700,633.4 C734.2,633.2 750.0,633.0 765,632.3 C780.0,631.6 782.8,629.8 790,629 C797.2,628.2 801.3,628.8 808,627.4 C814.7,626.0 823.8,622.4 830,620.4 C836.2,618.4 840.0,617.4 845,615.5 C850.0,613.6 854.5,611.1 860,609 C865.5,606.9 873.5,604.1 878,603 C882.5,601.9 883.0,602.5 887,602.4 C891.0,602.3 897.8,601.8 902,602.6 C906.2,603.4 909.0,605.7 912,607.3 C915.0,608.9 914.8,609.1 920,612 C925.2,614.9 939.2,622.5 943,624.6" fill="none" stroke="#ff0000" stroke-width="2" stroke-linejoin="round"/></g><text x="1483" y="613" fill="#fff" font-size="16" font-weight="bold">9.0000K</text><polygon points="1473,634 1478,629 1483,634 1478,639" fill="#fff"/><polygon points="1473,623 1484,611.8 1569,611.8 1569,630.6 1484,630.6" fill="#ff0000"/><text x="1487.4" y="630" fill="#fff" font-size="15.5" font-weight="normal">2.969,5478</text><polygon points="1473,642.4 1484,631 1569,631 1569,650 1478,650" fill="#00bfff"/><text x="1487" y="649" fill="#000" font-size="15.5" font-weight="normal">-3.339,5414</text><rect x="0" y="0" width="1569" height="2" fill="#b0b3b6"/><rect x="0" y="2" width="1569" height="25" fill="#d5d5d5"/><rect x="0" y="2" width="104" height="25" fill="#fff"/><rect x="105" y="2" width="1252" height="1" fill="#e2e2e2"/><path d="M104.5,2 V25 Q104.5,26.5 106,26.5 H1357.5 V2" fill="none" stroke="#ababab" stroke-width="1"/><rect x="1358" y="2" width="37" height="25" fill="#fff"/><rect x="0" y="27" width="1569" height="16" fill="#fff"/><rect x="0" y="43" width="1569" height="1" fill="#cccccc"/><rect x="0" y="44" width="1569" height="1" fill="#fff"/><rect x="1379" y="27" width="25" height="16" fill="#eceef0"/><rect x="1457" y="27" width="25" height="16" fill="#eceef0"/><rect x="26.0" y="27.5" width="1" height="16" fill="#d0d0d0"/><rect x="94.0" y="27.5" width="1" height="16" fill="#d0d0d0"/><rect x="117.0" y="27.5" width="1" height="16" fill="#d0d0d0"/><rect x="140.0" y="27.5" width="1" height="16" fill="#d0d0d0"/><rect x="212.0" y="27.5" width="1" height="16" fill="#d0d0d0"/><rect x="230.0" y="27.5" width="1" height="16" fill="#d0d0d0"/><rect x="249.0" y="27.5" width="1" height="16" fill="#d0d0d0"/><rect x="355.0" y="27.5" width="1" height="16" fill="#d0d0d0"/><rect x="412.0" y="27.5" width="1" height="16" fill="#d0d0d0"/><rect x="475.0" y="27.5" width="1" height="16" fill="#d0d0d0"/><rect x="1300.0" y="27.5" width="1" height="16" fill="#d0d0d0"/><rect x="1326.0" y="27.5" width="1" height="16" fill="#d0d0d0"/><rect x="1352.0" y="27.5" width="1" height="16" fill="#d0d0d0"/><rect x="1378.0" y="27.5" width="1" height="16" fill="#d0d0d0"/><rect x="1404.0" y="27.5" width="1" height="16" fill="#d0d0d0"/><rect x="1430.0" y="27.5" width="1" height="16" fill="#d0d0d0"/><rect x="1456.0" y="27.5" width="1" height="16" fill="#d0d0d0"/><rect x="1482.0" y="27.5" width="1" height="16" fill="#d0d0d0"/><circle cx="11.4" cy="13.5" r="6.2" fill="none" stroke="#666" stroke-width="1"/><text x="11.4" y="17" fill="#555" font-size="9.5" text-anchor="middle">1</text><text x="23.5" y="17" fill="#111" font-size="9.6">Bitcoin (USD)</text><circle cx="90.4" cy="12.6" r="4" fill="none" stroke="#555" stroke-width="1"/><line x1="93.4" y1="15.6" x2="96.8" y2="19" stroke="#555" stroke-width="1.1"/><path d="M113,13.9 H121 M117,9.9 V17.9" stroke="#8c8c8c" stroke-width="1.8"/><g fill="none" stroke="#9a9a9a" stroke-width="1" stroke-dasharray="1.5 1"><rect x="7.5" y="29.5" width="11" height="11"/><path d="M13,29.5 V40.5 M7.5,35 H18.5"/></g><text x="33" y="38" fill="#222" font-size="9.5">1 Woche</text><text x="146" y="38" fill="#222" font-size="9.5">4 Jahre</text><text x="276" y="38" fill="#222" font-size="9.5">Voreinstellungen</text><text x="382" y="38" fill="#222" font-size="9.5">Mittel</text><text x="439.7" y="38" fill="#222" font-size="9.5">Forum</text><text x="1508.8" y="38" fill="#222" font-size="9.5">Einstellungen</text><text x="98.8" y="37" fill="#3b6cf5" font-size="7.8" font-weight="bold">15m</text><text x="122" y="37" fill="#3b6cf5" font-size="7.8" font-weight="bold">1std</text><text x="217.8" y="37" fill="#3b6cf5" font-size="7.8" font-weight="bold">1T</text><text x="234.5" y="37" fill="#3b6cf5" font-size="7.8" font-weight="bold">1W</text><g stroke="#666" stroke-width="1.2"><path d="M259,30.5 H261.5 M264,30.5 H270 M259,34.4 H265 M267.5,34.4 H270 M259,38.2 H263 M265.5,38.2 H270"/><path d="M261.5,29 V32 M265.8,33 V36 M263.8,36.7 V39.7" stroke-width="1.4"/></g><g fill="none" stroke="#777" stroke-width="1"><path d="M366.3,31.5 V40 M370.4,30.5 V38.5 M374.4,29 V37.5"/><rect x="365.3" y="33.5" width="2" height="4" fill="#fff"/><rect x="369.4" y="32" width="2" height="4.5" fill="#fff"/><rect x="373.4" y="30.5" width="2" height="4.5" fill="#fff"/></g><path d="M422.5,30.5 H433.5 V37 H427 L425,39.5 V37 H422.5 Z" fill="none" stroke="#888" stroke-width="1"/><g stroke="#666" stroke-width="1" fill="none"><path d="M1312.6,30 H1317 M1312.6,32.5 H1317 M1312.6,35 H1317 M1312.6,37.4 H1317"/><path d="M1318.6,29 V39.5 H1308"/></g><text x="1333.8" y="38.6" fill="#777" font-size="11.5" font-family="Liberation Serif" font-weight="bold">T</text><text x="1341.5" y="38.6" fill="#999" font-size="7" font-family="Liberation Serif" font-weight="bold">T</text><g stroke="#555" stroke-width="1"><path d="M1363.5,29 V39.5 M1367.5,29 V39.5 M1360,32.4 H1371 M1360,36.2 H1371"/></g><g stroke="#3a8cff" stroke-width="1" fill="none"><path d="M1388.5,29.5 V36 M1391.5,29.5 V36 M1386,31.5 H1394 M1386,34.2 H1394"/><path d="M1389.8,39 L1396.5,32.5" stroke-width="2.6"/></g><g fill="#fff" stroke="#666" stroke-width="1"><rect x="1416" y="29.5" width="6.5" height="6"/><rect x="1414" y="31.5" width="6.5" height="6"/><rect x="1412" y="34" width="6" height="5.5"/></g><g stroke="#777" stroke-width="0.9" fill="none"><path d="M1443,30 V39 M1438.5,36 Q1440,34.5 1441.5,35 M1444.5,33.5 Q1447,32.5 1449,32"/><rect x="1441.5" y="32.8" width="3" height="3.6" fill="#fff"/></g><path d="M1464.6,34.4 L1468.6,30.6 H1475 V38.4 H1468.6 Z" fill="none" stroke="#3a8cff" stroke-width="1.3"/><g stroke="#555" fill="none"><circle cx="1497.4" cy="34.4" r="3.3" stroke-width="1.1"/><path d="M1492.5,34.4 H1494 M1500.8,34.4 H1502.3 M1495,30.2 L1495.8,31.4 M1499.8,30.2 L1499,31.4 M1495,38.6 L1495.8,37.4 M1499.8,38.6 L1499,37.4" stroke-width="1.2"/></g><polygon points="1364.8,12.2 1368,6.2 1371.2,12.2" fill="#777"/><text x="1391" y="12.2" fill="#111" font-size="9.8" text-anchor="end">0 %</text><text x="1391" y="21.7" fill="#111" font-size="9" text-anchor="end">0 Pkt.</text><rect x="1395" y="2" width="64" height="25" fill="#c4882a"/><rect x="1459" y="2" width="64.5" height="25" fill="#22a7be"/><text x="1404" y="14" fill="#3b3315" font-size="9.5">33.408,715</text><text x="1467.5" y="14" fill="#0e3a52" font-size="9.5">33.488,715</text><rect x="1443" y="18.3" width="32" height="8.2" fill="#6f6f6f"/><text x="1459" y="25.3" fill="#fff" font-size="8.2" text-anchor="middle">80,000</text><g fill="#cdcdcd"><rect x="1527" y="6" width="7" height="2"/><rect x="1527" y="11" width="7" height="2.5"/><rect x="1527" y="17" width="7" height="2.2"/><rect x="1527" y="22" width="7" height="2.5"/></g><g stroke="#666" stroke-width="1"><path d="M1527,4.4 H1534 M1527,9.5 H1534 M1527,15.5 H1534 M1527,20.4 H1534"/></g><g stroke="#666" stroke-width="1" fill="none"><path d="M1541,17.5 L1543.8,14.8 M1548.8,10 L1546,12.7"/></g><g fill="#666"><polygon points="1542.5,14.5 1544.5,14.5 1544.5,16.5"/><polygon points="1545.5,11 1547.5,13 1545.5,13"/></g><path d="M1560.5,11 L1566,16.5 M1566,11 L1560.5,16.5" stroke="#666" stroke-width="1.1"/></svg>
</body></html>
